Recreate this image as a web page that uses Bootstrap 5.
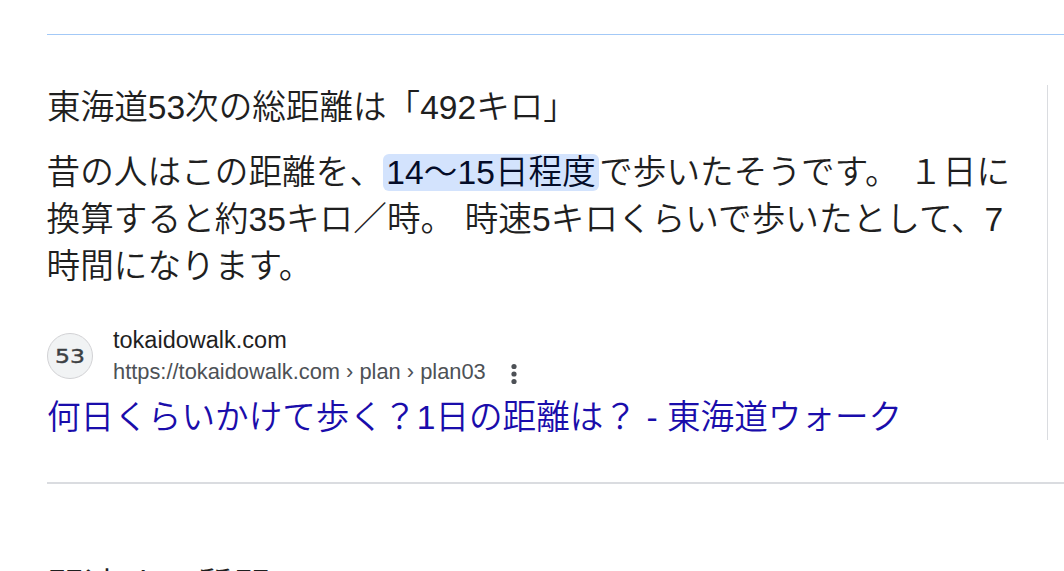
<!DOCTYPE html>
<html lang="ja">
<head>
  <meta charset="UTF-8">
  <meta name="viewport" content="width=device-width, initial-scale=1">
  <title>東海道53次の総距離</title>
  <link href="https://cdn.jsdelivr.net/npm/bootstrap@5.3.3/dist/css/bootstrap.min.css" rel="stylesheet">
  <style>
    body {
      font-family: "Liberation Sans", "Noto Sans CJK JP", sans-serif;
      font-size: 33.6px;
      font-weight: 350;
      line-height: 47px;
      color: #1f1f1f;
    }
    .results {
      padding: 34px 0 0 47px;
    }
    .rule-top {
      height: 1px;
      background: #a3c9f7;
    }
    .snippet {
      width: 1001px;
      height: 355px;
      margin-top: 50px;
      border-right: 1px solid #dadce0;
    }
    .snippet-title {
      font-size: 33.6px;
      line-height: 46px;
    }
    .snippet-text {
      margin-top: 18px;
      margin-left: -.5px;
      letter-spacing: .08px;
      word-spacing: 1px;
    }
    .answer {
      background: #d3e3fd;
      color: #040c28;
      border-radius: 6px;
      padding: 0 3.2px;
      display: inline-block;
      height: 37px;
      line-height: 37px;
    }
    .source {
      margin-top: 35px;
      height: 71px;
    }
    .favicon {
      width: 46px;
      height: 46px;
      margin-top: 8px;
      background: #f1f3f4;
      border: 1px solid #d2d2d5;
    }
    .site-name {
      font-size: 23.5px;
      line-height: 31px;
    }
    .site-url {
      font-size: 21.85px;
      line-height: 31px;
      color: #4d5156;
    }
    .site-url svg {
      margin-top: 4px;
    }
    .result-link {
      color: #1a0dab;
      line-height: 44px;
      letter-spacing: .03px;
    }
    .rule-bottom {
      height: 2px;
      margin-top: 42px;
      background: #dadce0;
    }
    .related {
      font-size: 37.3px;
      font-weight: 350;
      line-height: 48px;
      margin-top: 79px;
    }
  </style>
</head>
<body class="overflow-hidden vh-100 bg-white">

<main class="results">
  <div class="rule-top"></div>

  <!-- Fragmento destacado -->
  <section class="snippet text-nowrap">
    <div class="snippet-title">東海道53次の総距離は「492キロ」</div>
    <div class="snippet-text">
      <div>昔の人はこの距離を、<span class="answer">14～15日程度</span>で歩いたそうです。 １日に</div>
      <div>換算すると約35キロ／時。 時速5キロくらいで歩いたとして、7</div>
      <div>時間になります。</div>
    </div>

    <div class="source d-flex">
      <div class="favicon rounded-circle flex-shrink-0">
        <svg class="d-block" width="44" height="44" viewBox="0 0 44 44">
          <text x="7" y="29" font-family="DejaVu Sans" font-weight="400" font-size="20" textLength="30" lengthAdjust="spacingAndGlyphs" fill="#3c4043" stroke="#3c4043" stroke-width=".4">53</text>
        </svg>
      </div>
      <div class="ms-3 ps-1">
        <div class="site-name">tokaidowalk.com</div>
        <div class="site-url d-flex align-items-center">
          <span>https://tokaidowalk.com › plan › plan03</span>
          <svg class="ms-4" width="8" height="22" viewBox="0 0 8 22" fill="#4d5156">
            <circle cx="4" cy="3.5" r="2.6"/>
            <circle cx="4" cy="11" r="2.6"/>
            <circle cx="4" cy="18.5" r="2.6"/>
          </svg>
        </div>
      </div>
    </div>
    <a href="#" class="result-link d-block text-decoration-none">何日くらいかけて歩く？1日の距離は？ - 東海道ウォーク</a>
  </section>

  <div class="rule-bottom"></div>
  <h2 class="related mb-0">関連する質問</h2>
</main>

<script src="https://cdn.jsdelivr.net/npm/bootstrap@5.3.3/dist/js/bootstrap.bundle.min.js"></script>
</body>
</html>
